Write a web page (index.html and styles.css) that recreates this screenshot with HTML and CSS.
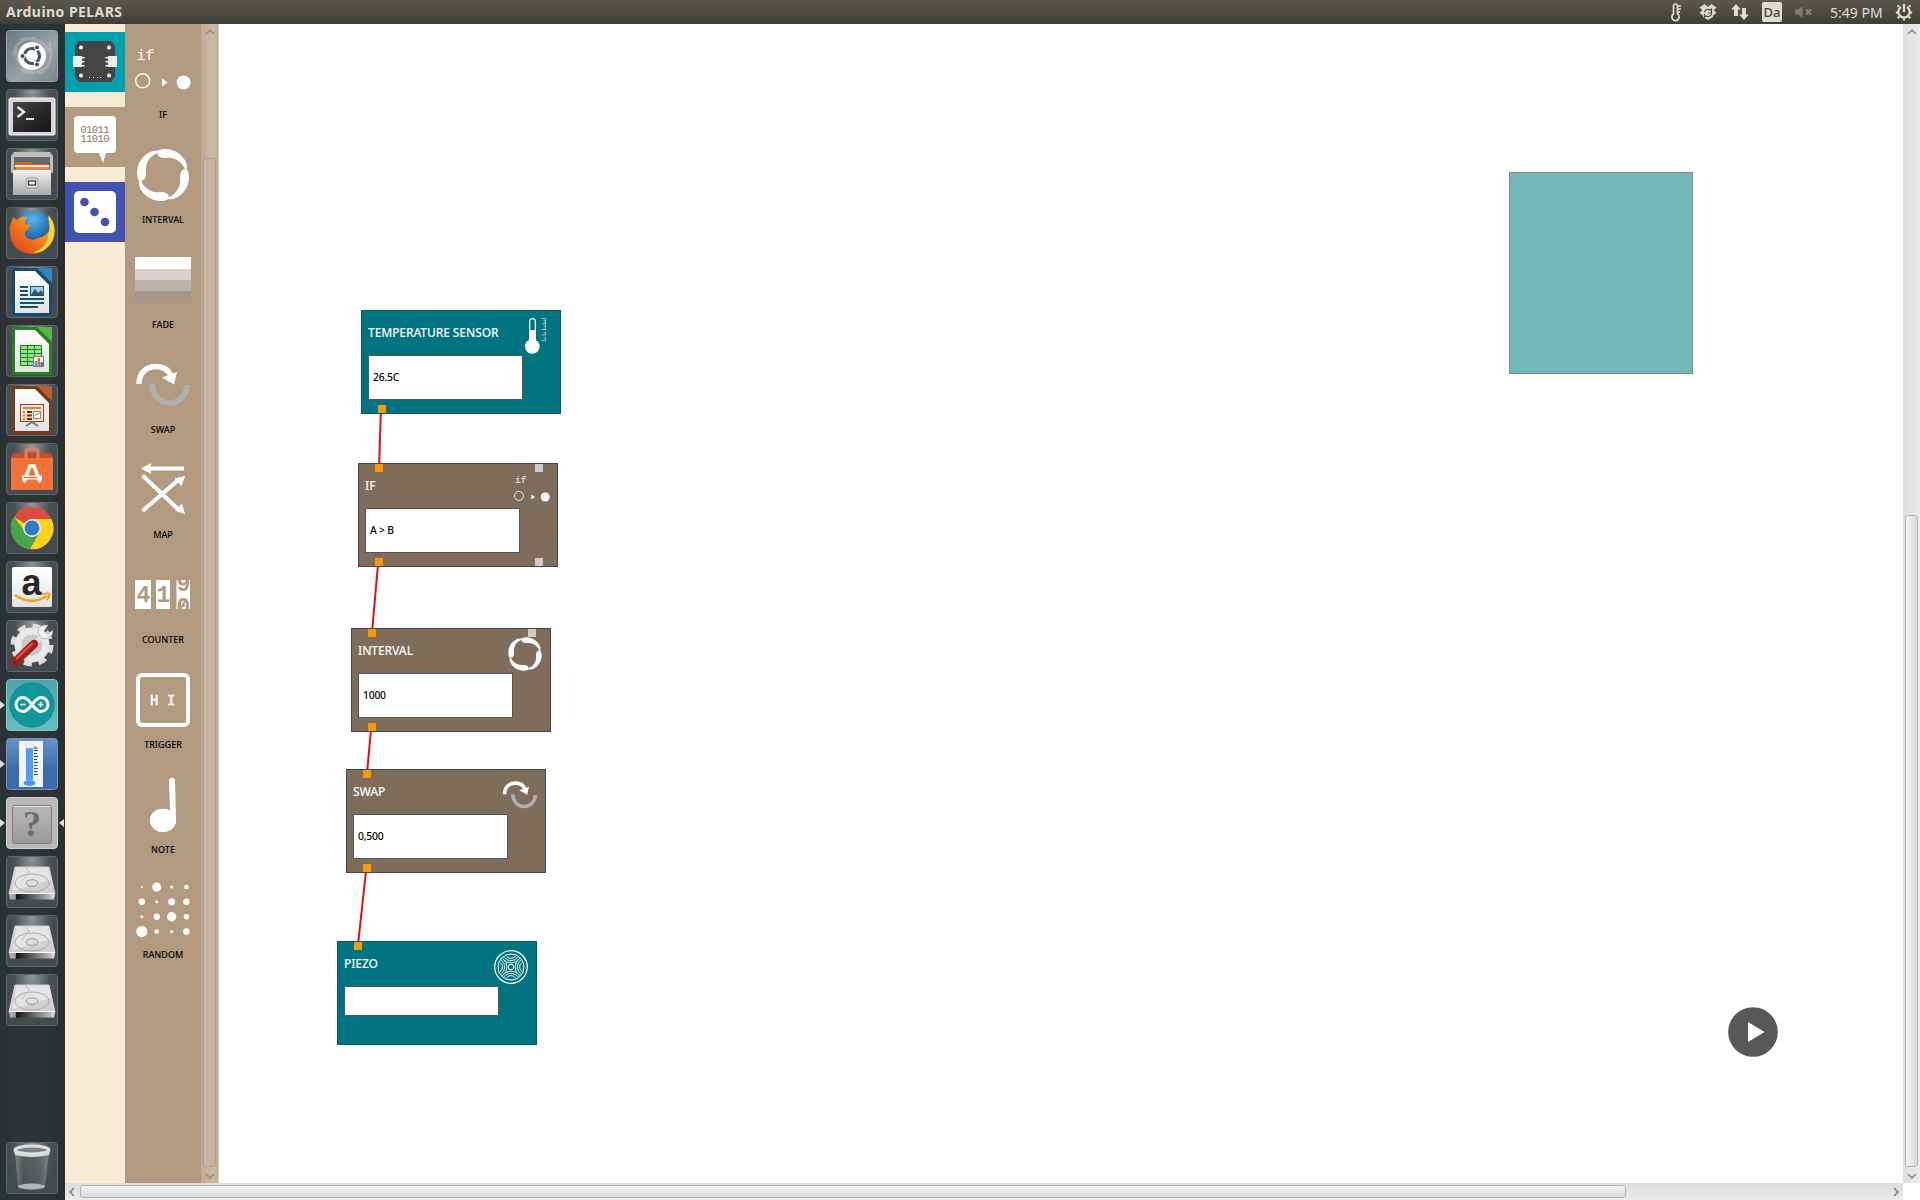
FILE: index.html
```html
<!DOCTYPE html>
<html lang="en">
<head>
<meta charset="utf-8">
<title>Arduino PELARS</title>
<link rel="stylesheet" href="styles.css">
</head>
<body>
<svg class="defs" aria-hidden="true">
  <defs>
    <linearGradient id="steel" x1="0" y1="0" x2="0" y2="1"><stop offset="0" stop-color="#f4f4f4"/><stop offset="1" stop-color="#a9a9a9"/></linearGradient>
    <linearGradient id="paper" x1="0" y1="0" x2="0" y2="1"><stop offset="0" stop-color="#fff"/><stop offset="1" stop-color="#e2e2e2"/></linearGradient>
    <linearGradient id="screen" x1="0" y1="0" x2="1" y2="1"><stop offset="0" stop-color="#4b4b4b"/><stop offset=".5" stop-color="#2a2a2a"/><stop offset="1" stop-color="#151515"/></linearGradient>
    <linearGradient id="fox" x1="0" y1="1" x2="1" y2="0"><stop offset="0" stop-color="#dc3a18"/><stop offset=".5" stop-color="#f27a1c"/><stop offset="1" stop-color="#ffd93f"/></linearGradient>
    <radialGradient id="globe" cx=".5" cy=".2" r=".8"><stop offset="0" stop-color="#58b8ea"/><stop offset=".6" stop-color="#1a62a8"/><stop offset="1" stop-color="#12285e"/></radialGradient>
    <linearGradient id="hdd-front" x1="0" y1="0" x2="1" y2="0"><stop offset="0" stop-color="#bbb"/><stop offset=".14" stop-color="#999"/><stop offset=".15" stop-color="#111"/><stop offset=".9" stop-color="#bbb"/><stop offset="1" stop-color="#eee"/></linearGradient>
    <linearGradient id="can" x1="0" y1="0" x2="1" y2="0"><stop offset="0" stop-color="#8b9092"/><stop offset=".25" stop-color="#4d5456"/><stop offset=".75" stop-color="#5d6466"/><stop offset="1" stop-color="#8b9092"/></linearGradient>
    <linearGradient id="fader" x1="0" y1="0" x2="0" y2="1"><stop offset="0" stop-color="#a49686"/><stop offset=".8" stop-color="#a49686"/><stop offset="1" stop-color="#ab9782"/></linearGradient>

    <symbol id="if" viewBox="0 0 56 56">
      <text x="1.500" y="18" class="glyph-if">if</text>
      <circle cx="7.700" cy="38.700" r="7" fill="none" stroke="#fff" stroke-width="1.400"/>
      <path d="M27 36.500l5.600 4-5.600 4z" fill="#fff"/><circle cx="48.600" cy="40.500" r="7" fill="#fff"/>
    </symbol>
    <symbol id="interval" viewBox="0 0 56 56">
      <g fill="#fff">
        <path id="q" d="M3 32Q1 26 3 19Q6 10 14 5.500Q18 3.200 23 4L22.500 6Q16 8 12 16Q10.300 20 11 26Q11 32 7.500 33.500Q4 34 3 32Z"/>
        <use href="#q" transform="rotate(90 28 28)"/><use href="#q" transform="rotate(180 28 28)"/><use href="#q" transform="rotate(270 28 28)"/>
      </g>
    </symbol>
    <symbol id="fade" viewBox="0 0 56 56">
      <path fill="#fff" d="M0 5h56v12H0z"/><path fill="#d6d1cc" d="M0 17h56v11H0z"/><path fill="#bcb2a8" d="M0 28h56v11H0z"/><path fill="url(#fader)" d="M0 39h56v11H0z"/>
    </symbol>
    <symbol id="swap" viewBox="0 0 56 56">
      <path d="M4 27C4 15 12 9.500 21 9.500C28 9.500 33.500 13 36 19" fill="none" stroke="#fff" stroke-width="5.500"/>
      <path d="M27 20.500L42 15L39 27.500Z" fill="#fff"/>
      <path d="M17 27a17.500 18.500 0 0 0 35 1" fill="none" stroke="#b0b0b0" stroke-width="5.500"/>
    </symbol>
    <symbol id="map" viewBox="0 0 56 56">
      <path d="M13 6.500H49M7.500 13.500L45 49M7.500 49L45 16.500" fill="none" stroke="#fff" stroke-width="4"/>
      <path fill="#fff" d="M6 6.500L16 1v11zM50 14l-3.500 10-7-7.500zM50 52l-3-10.500-7 7z"/>
    </symbol>
    <symbol id="counter" viewBox="0 0 56 56">
      <path d="M0 13h16v29H0zM21 13h14v29H21zM41.500 13H55v29H41.500z" fill="#fff"/>
      <clipPath id="wheel"><path d="M41 13h14v29H41z"/></clipPath>
      <g class="digit"><text x="1.500" y="34.500">4</text><text x="21.500" y="34.500">1</text><g clip-path="url(#wheel)"><text x="41.500" y="23.500">9</text><text x="41.500" y="46.500">0</text><path d="M45 43l6-11" fill="none" stroke="#b19a7f" stroke-width="1.800"/></g></g>
    </symbol>
    <symbol id="trigger" viewBox="0 0 56 56">
      <rect x="3" y="3" width="50" height="50" rx="4" fill="none" stroke="#fff" stroke-width="4"/>
      <text x="15" y="32.500" class="glyph-hi">H</text><text x="32" y="32.500" class="glyph-hi">I</text>
    </symbol>
    <symbol id="note" viewBox="0 0 56 56">
      <path d="M34 3.500Q34 .8 37 .8Q40 .8 40 3.500L41 42A13 11.500 0 1 1 35 33.500Z" fill="#fff"/>
      <ellipse cx="28" cy="43.500" rx="13" ry="11.500" fill="#fff"/>
    </symbol>
    <symbol id="random" viewBox="0 0 56 56">
      <g fill="#fff"><circle cx="6.800" cy="5" r="1"/><circle cx="21.700" cy="5" r="4.500"/><circle cx="36.600" cy="5" r="1.500"/><circle cx="51.400" cy="5" r="2.300"/>
      <circle cx="6.800" cy="19.800" r="3.200"/><circle cx="21.700" cy="19.800" r="1.500"/><circle cx="36.600" cy="19.800" r="3.500"/><circle cx="51.400" cy="19.800" r="3.200"/>
      <circle cx="6.800" cy="34.700" r="1.500"/><circle cx="21.700" cy="34.700" r="3.200"/><circle cx="36.600" cy="34.700" r="4.700"/><circle cx="51.400" cy="34.700" r="2.700"/>
      <circle cx="6.800" cy="49.500" r="5.500"/><circle cx="21.700" cy="49.500" r="2.300"/><circle cx="36.600" cy="49.500" r="1.600"/><circle cx="51.400" cy="49.500" r="3.200"/></g>
    </symbol>
    <symbol id="thermo" viewBox="0 0 36 36">
      <path d="M12.700 24V3.500Q12.700.6 15.500.6Q18.300.6 18.300 3.500V24" fill="none" stroke="#fff" stroke-width="1.200"/>
      <path d="M12 12h7v12h-7z" fill="#fff"/><circle cx="15.300" cy="28.500" r="7.300" fill="#fff"/>
      <path d="M28.500.5v11.500M28.500 14.500v2.500M28.500 19.500v3M24.500.5h4M26.500 3h2M25.500 5.500h3M26.500 8h2M24.500 11.500h4M26.500 14.500h2M24.500 17h4M26.500 20h2M24.500 22.500h4" stroke="#fff" stroke-width=".7" opacity=".85"/>
    </symbol>
    <symbol id="piezo" viewBox="0 0 36 36">
      <g fill="none" stroke="#fff"><circle cx="18" cy="18" r="16.300" stroke-width="1.200"/><circle cx="18" cy="18" r="13"/>
      <rect x="15.500" y="15.500" width="5" height="5" rx="1.500"/>
      <g id="arcs" stroke-width=".9"><path d="M9.500 9.500Q13 14 18 14T26.500 9.500M11.300 8.300Q14 11.700 18 11.700T24.700 8.300M13.500 7.200Q15.500 9.400 18 9.400T22.500 7.200"/></g>
      <use href="#arcs" transform="rotate(90 18 18)"/><use href="#arcs" transform="rotate(180 18 18)"/><use href="#arcs" transform="rotate(270 18 18)"/></g>
    </symbol>

    <symbol id="drive" viewBox="0 0 52 52">
      <path d="M9 11h34l6 27H3z" fill="#d0d0d0" stroke="#e8e8e8" stroke-width=".8"/>
      <path d="M10 12h32l3 12-38 11z" fill="#e4e4e4"/>
      <ellipse cx="26" cy="27" rx="17" ry="9" fill="none" stroke="#aaa"/>
      <ellipse cx="26" cy="27" rx="6" ry="3.300" fill="#ddd" stroke="#999"/>
      <path d="M20 12l3 4-7 9" fill="none" stroke="#bbb"/>
      <path d="M3 37.500h46l-1 6H4z" fill="url(#hdd-front)"/><path d="M3 37.500h46" stroke="#fff" stroke-width="1.200"/>
    </symbol>
  </defs>
</svg>

<header class="panel">
  <span class="panel-title">Arduino PELARS</span>
  <div class="tray">
    <svg class="tray-thermo" width="12" height="20" viewBox="0 0 12 20"><path d="M3.500 12V4a2 2 0 0 1 4 0v8a3.600 3.600 0 1 1-4 0z" fill="none" stroke="#dfdbd2" stroke-width="1.700"/><path d="M8 4h3M8 7h3M8 10h2" stroke="#dfdbd2" stroke-width="1.600"/></svg>
    <svg class="tray-box" width="18" height="18" viewBox="0 0 18 18"><path d="M5.500 1L9 4l3.500-3L17.500 4.500 14.500 7l3 3L14 12.500V14L9 17 4 14v-1.500L.5 10l3-3-3-2.500z" fill="#dfdbd2"/><path d="M5.500 9.500A3.500 3.500 0 0 1 11 7l1.500-1v4H9M12.500 10.500A3.500 3.500 0 0 1 7 13l-1.500 1v-3" fill="none" stroke="#4a4942" stroke-width="1.200"/></svg>
    <svg class="tray-net" width="18" height="18" viewBox="0 0 18 18"><path d="M5 1l5 5.500H7V13H3V6.500H0zM13 17l5-5.500h-3V5h-4v6.500H8z" fill="#dfdbd2"/></svg>
    <span class="tray-lang">Da</span>
    <svg class="tray-mute" width="18" height="14" viewBox="0 0 18 14"><path d="M0 4.500h3L7.500 1v12L3 9.500H0z" fill="#7d7c76"/><path d="M11 4.500l5 5M16 4.500l-5 5" stroke="#8a8983" stroke-width="1.800"/></svg>
    <span class="tray-time">5:49 PM</span>
    <svg class="tray-gear" width="18" height="18" viewBox="0 0 18 18"><path d="M6 4A5.700 5.700 0 1 0 12 4" fill="none" stroke="#dfdbd2" stroke-width="2.200"/><path d="M9 1v8M3.800 3.800L2.500 2.500M14.200 3.800l1.300-1.300M3 9.500H.8M15 9.500h2.200M4.500 13.500l-1.800 1.800M13.500 13.500l1.800 1.800M9 15v2.500" stroke="#dfdbd2" stroke-width="2.200"/></svg>
  </div>
</header>

<div class="desktop">
  <nav class="launcher">
    <div class="app app-dash"><svg viewBox="0 0 52 52"><g fill="none" stroke="#fff" opacity=".2" stroke-width="2.500"><path d="M7 25Q10 8 30 8M14 10Q35 5 44 22M43 12Q50 35 33 44M45 30Q35 48 15 40M10 18Q8 36 28 44"/></g><circle cx="26" cy="26" r="14" fill="#fff"/><circle cx="26" cy="26" r="7.500" fill="none" stroke="#4a5459" stroke-width="3" stroke-dasharray="13.500 2.200" stroke-dashoffset="6"/><g fill="#4a5459" stroke="#fff"><circle cx="16.500" cy="26" r="2.500"/><circle cx="31" cy="17.500" r="2.500"/><circle cx="31" cy="34.500" r="2.500"/></g></svg></div>
    <div class="app"><svg viewBox="0 0 52 52"><rect x="3" y="9" width="46" height="37" rx="1.500" fill="#d8d8d8" stroke="#f5f5f5"/><rect x="7" y="13" width="38" height="30" fill="url(#screen)"/><path d="M11.500 18l6.500 5-6.500 5" fill="none" stroke="#e8e8e8" stroke-width="2.400"/><path d="M20 30h8" stroke="#e8e8e8" stroke-width="2"/></svg></div>
    <div class="app"><svg viewBox="0 0 52 52"><path d="M8 4h36l3 4v17H5V8z" fill="#bdbdbd"/><path d="M8 9h36v15H8z" fill="#666"/><path d="M9 14h16l2 2h15v9H9z" fill="#c9622c"/><path d="M9 17h34v2H9z" fill="#f6e4cf"/><path d="M10 19h33v4H10z" fill="#e78a46"/><path d="M7 22h38v25H7z" fill="url(#steel)"/><rect x="20" y="30" width="12" height="10" rx="2" fill="#ddd" stroke="#999"/><rect x="22.500" y="33" width="7" height="4" fill="#eee" stroke="#333" stroke-width="1.200"/></svg></div>
    <div class="app"><svg viewBox="0 0 52 52"><circle cx="27" cy="25" r="21" fill="url(#globe)"/><path d="M5 16L7 10l4 3q5-5 11-3q-4 3-3 7l6 1-4 5q-4 2-1 7q6 5 12 1q7-1 11-7q2-7-2-14q9 7 6 19Q43 46 26 47Q5 45 4 26Q3 20 5 16z" fill="url(#fox)"/><path d="M42 8q10 10 5 25q-7 13-20 13q13-5 15-16q3-10 0-22z" fill="#ffd33b"/></svg></div>
    <div class="app"><svg viewBox="0 0 52 52"><path d="M6 2h26l14 14v34H6z" fill="#164b73"/><path d="M31 2h15v15z" fill="#3485b9"/><path d="M9 5h20l14 14v28H9z" fill="url(#paper)"/><path d="M14 21h8M14 25h8M14 29h8M14 33h24M14 37h24M14 41h18" stroke="#14507c" stroke-width="2"/><rect x="24.500" y="20.500" width="13" height="9" fill="#a2cfee" stroke="#14507c"/><path d="M25 29l4-6 3 4 3-3 3 5z" fill="#315868"/></svg></div>
    <div class="app"><svg viewBox="0 0 52 52"><path d="M6 2h26l14 14v34H6z" fill="#24831a"/><path d="M31 2h15v15z" fill="#55b649"/><path d="M9 5h20l14 14v28H9z" fill="url(#paper)"/><path d="M14 20h21v20H14z" fill="#9ae28f"/><path d="M14.500 20.500h21v20h-21zM14 24.500h21M14 28.500h21M14 32.500h21M14 36.500h21M21.500 20v20M28.500 20v20" fill="none" stroke="#168016"/><path d="M27.500 31.500h10v10h-10z" fill="#fff" stroke="#777"/><path d="M30 36v5" stroke="#4b9ee2" stroke-width="2.500"/><path d="M32.800 33v8" stroke="#e26b2c" stroke-width="2.500"/><path d="M35.700 37v4" stroke="#3978b8" stroke-width="2.500"/></svg></div>
    <div class="app"><svg viewBox="0 0 52 52"><path d="M6 2h26l14 14v34H6z" fill="#793a19"/><path d="M31 2h15v15z" fill="#b76131"/><path d="M9 5h20l14 14v28H9z" fill="url(#paper)"/><rect x="14.500" y="20.500" width="23" height="17" fill="#fde3cc" stroke="#9c4316"/><path d="M17 24h18" stroke="#c4825b" stroke-width="2"/><path d="M21 28h5M21 31.500h5M21 35h5" stroke="#7c2b08" stroke-width="2"/><path d="M17 28h2M17 31.500h2M17 35h2" stroke="#c4825b" stroke-width="2"/><path d="M27.500 27.500h7v7h-7z" fill="#fff" stroke="#888"/><path d="M28.500 32l2-2 1 1 2.500-2.500" stroke="#2a9a30" fill="none"/><path d="M26 38l-6 4M26 38l6 4" stroke="#777" stroke-width="2"/></svg></div>
    <div class="app"><svg viewBox="0 0 52 52"><path d="M5 15l3-5h36l3 5v32H5z" fill="#ef7339"/><path d="M5 15l3-5h36l3 5z" fill="#c84c23"/><path d="M20 17V9q0-3 3-3h6q3 0 3 3v8" fill="none" stroke="#e97a5a" stroke-width="3"/><path d="M18 39l6-16h4l6 16" fill="none" stroke="#fff" stroke-width="3.500"/><path d="M16 34.500h20" stroke="#fff" stroke-width="4"/><path d="M18 34.500h13" stroke="#ef7339" stroke-width="1.500"/></svg></div>
    <div class="app"><svg viewBox="0 0 52 52"><circle cx="26" cy="26" r="21" fill="#ffd21f"/><path d="M26 26L8 15a21 21 0 0 1 37 2H26z" fill="#dd4a3f"/><path d="M8 15a21 21 0 0 0 16 32l10-17-16-2z" fill="#48a548"/><path d="M26 17h19.500a21 21 0 0 1-21 30L34 30z" fill="#ffd21f"/><circle cx="26" cy="26" r="9" fill="#f2f5f7"/><circle cx="26" cy="26" r="7.500" fill="#3579c0"/></svg></div>
    <div class="app"><svg viewBox="0 0 52 52"><rect x="6" y="6" width="40" height="40" rx="2" fill="url(#paper)"/><text x="15.500" y="33.500" class="glyph-a">a</text><path d="M9 34Q25 45 41 35" fill="none" stroke="#ff9b12" stroke-width="2.500"/><path d="M36 33.500q7-2 7.500-.5t-2.500 6" fill="none" stroke="#ff9b12" stroke-width="2"/></svg></div>
    <div class="app"><svg viewBox="0 0 52 52"><circle cx="26" cy="25" r="19" fill="none" stroke="#ddd" stroke-width="5" stroke-dasharray="8 6.920"/><circle cx="26" cy="25" r="14" fill="#c8c8c8" stroke="#e8e8e8" stroke-width="7"/><path d="M22 31L40 13" stroke="#e3e3e3" stroke-width="5"/><path d="M42 5q-9-1-10 6 0 7 7 8 8-1 8-9l-6 4-3-3z" fill="#f0f0f0" stroke="#888" stroke-width=".5"/><path d="M9 42L28 24" stroke="#a61e1c" stroke-width="8.500" stroke-linecap="round"/><path d="M10 39L27 23" stroke="#da4b47" stroke-width="2.500"/><circle cx="8.500" cy="42.500" r="1.500" fill="#333"/></svg></div>
    <div class="app app-arduino running"><svg viewBox="0 0 52 52"><circle cx="26" cy="26" r="22" fill="#0f979d" stroke="#168187"/><path d="M26 25.500C22 20 20 18.500 17 18.500a7 7 0 0 0 0 14C20 32.500 22 31 26 25.500C30 20 32 18.500 35 18.500a7 7 0 0 1 0 14C32 32.500 30 31 26 25.500Z" fill="none" stroke="#fff" stroke-width="3"/><path d="M14.500 25.500h5M32 25.500h5.500M34.700 22.700v5.600" stroke="#fff" stroke-width="1.600"/></svg></div>
    <div class="app app-blue running"><svg viewBox="0 0 52 52"><path d="M13 3h24v46H13z" fill="#f1f4f8"/><path d="M20 6h7v36h-7z" fill="#519cf1"/><path d="M20 6h7v4h-7z" fill="#fff" stroke="#bbb" stroke-width=".5"/><ellipse cx="23.500" cy="45" rx="6" ry="3" fill="#4594f3"/><path d="M28 12.500h4M28 15.500h3M28 18.500h4M28 21.500h3M28 24.500h4M28 27.500h3M28 30.500h4M28 33.500h3M28 36.500h4" stroke="#444"/><path d="M28 8l5 2-5 2z" fill="#999"/></svg></div>
    <div class="app app-unknown running active"><svg viewBox="0 0 52 52"><rect x="6.500" y="8.500" width="39" height="38" rx="2" fill="url(#steel)" stroke="#777"/><rect x="6.500" y="8.500" width="39" height="38" rx="2" fill="#909090" opacity=".6"/><path d="M8 9.500h36" stroke="#e8e8e8"/><text x="26" y="39" class="glyph-q" text-anchor="middle">?</text></svg></div>
    <div class="app"><svg><use href="#drive"/></svg></div>
    <div class="app"><svg><use href="#drive"/></svg></div>
    <div class="app"><svg><use href="#drive"/></svg></div>
    <div class="app app-trash"><svg viewBox="0 0 52 52"><path d="M9 10h34l-4 35q-13 5-27 0z" fill="url(#can)" opacity=".8"/><ellipse cx="25.500" cy="44.500" rx="13.500" ry="3" fill="#b4b8b5"/><ellipse cx="26" cy="8" rx="17" ry="4" fill="#7b8080" stroke="#e2e2e0" stroke-width="3"/><path d="M8 9q18 8 36 0l-1 4q-17 4-34 0z" fill="#d9dad8"/></svg></div>
  </nav>

  <main class="window">
    <div class="workspace">
      <aside class="categories">
        <div class="category cat-board"><svg viewBox="0 0 60 60"><path d="M14 9h32l4 5v31l-4 5H14l-4-5V14z" fill="#434446"/><g fill="#fff"><circle cx="16" cy="15.500" r="2"/><circle cx="44" cy="15.500" r="2"/><circle cx="16" cy="43.500" r="2"/><circle cx="44" cy="43.500" r="2"/><path d="M15 25h4.500v1.500H15zM15 29h4.500v1.500H15zM15 33h4.500v1.500H15zM40.500 25H45v1.500h-4.500zM40.500 29H45v1.500h-4.500zM40.500 33H45v1.500h-4.500z"/><path d="M24 45h1v1h-1zM28 45h1v1h-1zM32 45h1v1h-1zM35 45h1v1h-1z"/></g><path d="M8 24h9v11H8zM43 24h9v11h-9z" fill="#eeeeee"/></svg></div>
        <div class="category cat-logic"><svg viewBox="0 0 60 60"><path d="M13 9h34q4 0 4 4v29q0 4-4 4h-6l-3 10-4-10H13q-4 0-4-4V13q0-4 4-4z" fill="#fff"/><g class="bits"><text x="15.500" y="25.800" textLength="29">01011</text><text x="15.500" y="34.800" textLength="29">11010</text></g></svg></div>
        <div class="category cat-random"><svg viewBox="0 0 60 60"><rect x="9" y="9" width="42" height="42" rx="5" fill="#fff"/><g fill="#4552ae"><circle cx="19.500" cy="20" r="4.300"/><circle cx="29.500" cy="30" r="4.300"/><circle cx="40" cy="40" r="4.300"/></g></svg></div>
      </aside>

      <aside class="palette">
        <div class="tool"><svg><use href="#if"/></svg><span>IF</span></div>
        <div class="tool"><svg><use href="#interval"/></svg><span>INTERVAL</span></div>
        <div class="tool"><svg><use href="#fade"/></svg><span>FADE</span></div>
        <div class="tool"><svg><use href="#swap"/></svg><span>SWAP</span></div>
        <div class="tool"><svg><use href="#map"/></svg><span>MAP</span></div>
        <div class="tool"><svg><use href="#counter"/></svg><span>COUNTER</span></div>
        <div class="tool"><svg><use href="#trigger"/></svg><span>TRIGGER</span></div>
        <div class="tool"><svg><use href="#note"/></svg><span>NOTE</span></div>
        <div class="tool"><svg><use href="#random"/></svg><span>RANDOM</span></div>
      </aside>
      <div class="vbar vbar-palette">
        <svg class="arrow" viewBox="0 0 10 6"><path d="M1 5l4-4 4 4"/></svg><div class="track"><div class="thumb"></div></div><svg class="arrow" viewBox="0 0 10 6"><path d="M1 1l4 4 4-4"/></svg>
      </div>

      <section class="canvas">
        <div class="node hardware n-temp"><h2>TEMPERATURE SENSOR</h2><svg class="node-icon"><use href="#thermo"/></svg><div class="field">26.5C</div><i class="port out"></i></div>
        <div class="node logic n-if"><h2>IF</h2><svg class="node-icon"><use href="#if"/></svg><div class="field">A &gt; B</div><i class="port in"></i><i class="port out"></i><i class="port in spare"></i><i class="port out spare"></i></div>
        <div class="node logic n-interval"><h2>INTERVAL</h2><i class="port in spare"></i><svg class="node-icon"><use href="#interval"/></svg><div class="field">1000</div><i class="port in"></i><i class="port out"></i></div>
        <div class="node logic n-swap"><h2>SWAP</h2><svg class="node-icon"><use href="#swap"/></svg><div class="field">0,500</div><i class="port in"></i><i class="port out"></i></div>
        <div class="node hardware n-piezo"><h2>PIEZO</h2><svg class="node-icon"><use href="#piezo"/></svg><div class="field short"></div><i class="port in"></i></div>
        <svg class="wires" viewBox="219 24 1684 1159"><path d="M380.800 414L379.200 463M377.800 567L372.400 628M370.800 732L367.400 769M365.800 873L358.400 941"/></svg>
        <div class="drop-area"></div>
        <svg class="play" viewBox="0 0 50 50"><circle cx="25" cy="25" r="24.800" fill="#58585b"/><path d="M20 15l16.500 10L20 35z" fill="#fff"/></svg>
      </section>
      <div class="vbar vbar-main">
        <svg class="arrow" viewBox="0 0 10 6"><path d="M1 5l4-4 4 4"/></svg><div class="track"><div class="thumb"></div></div><svg class="arrow" viewBox="0 0 10 6"><path d="M1 1l4 4 4-4"/></svg>
      </div>
    </div>
    <div class="hbar">
      <svg class="arrow-h" viewBox="0 0 6 10"><path d="M5 1L1 5l4 4"/></svg><div class="thumb-h"></div><svg class="arrow-h" viewBox="0 0 6 10"><path d="M1 1l4 4-4 4"/></svg>
    </div>
  </main>
</div>
</body>
</html>
```
FILE: styles.css
```css
* { box-sizing: border-box; }
body {
  margin: 0;
  width: 1920px;
  height: 1200px;
  overflow: hidden;
  display: flex;
  flex-direction: column;
  background: #fff;
  font-family: "Noto Sans", "Open Sans", sans-serif;
}
svg { display: block; flex: none; }
.defs { position: absolute; width: 0; height: 0; }

/* top panel */
.panel {
  height: 24px;
  flex: none;
  display: flex;
  align-items: center;
  justify-content: space-between;
  padding: 0 7px 0 6px;
  background: linear-gradient(#5b594f, #3f3e38);
  color: #dfdbd2;
}
.panel-title { font: bold 14px/24px "Noto Sans", sans-serif; letter-spacing: .45px; }
.tray { display: flex; align-items: center; }
.tray-thermo { margin-right: 17px; }
.tray-box { margin-right: 14px; }
.tray-net { margin-right: 13px; }
.tray-lang {
  width: 20px;
  height: 20px;
  margin-right: 13px;
  border-radius: 2px;
  background: #dfdbd2;
  color: #45443e;
  font: 500 13px/20px "Noto Sans", sans-serif;
  text-align: center;
}
.tray-mute { margin-right: 17px; }
.tray-time { width: 53px; margin-right: 12px; font-size: 14px; white-space: nowrap; }

.desktop { flex: 1; display: flex; min-height: 0; }

/* launcher */
.launcher {
  width: 65px;
  flex: none;
  display: flex;
  flex-direction: column;
  gap: 7px;
  padding: 6px 0 6px 6px;
  background: linear-gradient(90deg, #2b3235, #2f3537 50%, #293032);
}
.app {
  position: relative;
  width: 52px;
  height: 52px;
  flex: none;
  border: 1px solid #60686b;
  border-radius: 4px;
  background: radial-gradient(ellipse at 50% 0, #90979a 0, #4b5255 50%, transparent 75%), #444b4e;
}
.app > svg { width: 52px; height: 52px; margin: -1px; }
.app-dash { background: linear-gradient(135deg, #6b7b82, #98a4a9 60%, #77878d); border-color: #98a2a6; }
.app-arduino { background: linear-gradient(#4ba5aa, #67bdc0); border-color: #85c9cb; }
.app-blue { background: linear-gradient(#6b8fc7, #3b6ead 60%, #3c6ba6); border-color: #6f95c5; }
.app-unknown { background: #b9b9b9; border-color: #d2d2d2; }
.app-trash { margin-top: auto; }
.running::before, .active::after {
  content: "";
  position: absolute;
  top: 21px;
  border: 4px solid transparent;
}
.running::before { left: -7px; border-left: 5px solid #dfe1e2; border-right: 0; }
.active::after { right: -7px; border-right: 5px solid #dfe1e2; border-left: 0; }
.glyph-a { font: bold 36px "Liberation Sans", sans-serif; fill: #262626; }
.glyph-q { font: bold 36px "Liberation Serif", serif; fill: #6c6c6c; }

/* application window */
.window { flex: 1; display: flex; flex-direction: column; min-width: 0; }
.workspace { flex: 1; display: flex; min-height: 0; }

.categories {
  width: 60px;
  flex: none;
  display: flex;
  flex-direction: column;
  gap: 15px;
  padding-top: 8px;
  background: #f9ead6;
}
.category { height: 60px; }
.cat-board { background: #00a1ad; }
.cat-logic { background: #b19a7f; }
.cat-random { background: #4353b2; }
.bits { font: 10.500px "Liberation Mono", monospace; fill: #8d7558; }

.palette {
  width: 76px;
  flex: none;
  display: flex;
  flex-direction: column;
  background: #b19a7f;
}
.tool {
  height: 105px;
  flex: none;
  display: flex;
  flex-direction: column;
  align-items: center;
  padding-top: 18px;
}
.tool svg { width: 56px; height: 56px; }
.tool span { margin-top: 10px; color: #000; font-size: 9px; font-weight: 500; line-height: 13px; }
.glyph-if { font: 15px "Liberation Mono", monospace; fill: #fff; }
.glyph-hi { font: 14px "Liberation Mono", monospace; fill: #fff; stroke: #fff; stroke-width: .4px; }
.digit { font: bold 23px "Liberation Mono", monospace; fill: #b19a7f; }

/* scrollbars */
.vbar { flex: none; display: flex; flex-direction: column; align-items: center; padding: 5px 0 4px; }
.vbar .arrow { width: 10px; height: 6px; }
.arrow, .arrow-h { fill: none; stroke: #858585; stroke-width: 1.6; }
.track { flex: 1; display: flex; flex-direction: column; justify-content: flex-end; padding-bottom: 6px; }
.thumb { border: 1px solid #b3b3b3; border-radius: 3px; background: linear-gradient(90deg, #f5f5f5, #dadada); }
.vbar-palette { width: 18px; background: linear-gradient(90deg, #bca992, #cbbba8 70%, #c0ae9a); border-right: 1px solid #d8d1ca; }
.vbar-palette .arrow { stroke: #9a8976; }
.vbar-palette .thumb { width: 13px; height: 1009px; border-color: #b09e8a; background: linear-gradient(90deg, #c9b9a6, #c1b09c); }
.vbar-main { width: 17px; background: linear-gradient(90deg, #dedede, #ececec); }
.vbar-main .thumb { width: 13px; height: 652px; }
.hbar {
  width: 1838px;
  height: 17px;
  flex: none;
  display: flex;
  align-items: center;
  padding: 0 4px;
  background: linear-gradient(#dcdcdc, #ececec);
}
.arrow-h { width: 6px; height: 10px; }
.thumb-h {
  width: 1546px;
  height: 13px;
  margin: 0 auto 0 5px;
  border: 1px solid #b3b3b3;
  border-radius: 3px;
  background: linear-gradient(#f5f5f5, #dadada);
}

/* free-form canvas */
.canvas { position: relative; width: 1684px; flex: none; background: #fff; }
.node {
  position: absolute;
  width: 200px;
  height: 104px;
  padding: 12px 6px 0;
  border: 1px solid;
}
.hardware { background: #007480; border-color: #0a5a63; }
.logic { background: #7e6d5b; border-color: #4a4542; }
.n-temp { left: 142px; top: 286px; }
.n-if { left: 139px; top: 439px; }
.n-interval { left: 132px; top: 604px; }
.n-swap { left: 127px; top: 745px; }
.n-piezo { left: 118px; top: 917px; }
.node h2 { margin: 0; height: 32px; color: #fff; font-size: 12px; font-weight: 500; line-height: 20px; letter-spacing: -.1px; white-space: nowrap; }
.node-icon { position: absolute; left: 155px; top: 7px; width: 36px; height: 36px; }
.field {
  width: 155px;
  height: 45px;
  padding-left: 4px;
  border: 1px solid #555;
  background: #fff;
  color: #000;
  font-size: 10.300px;
  font-weight: 500;
  line-height: 43px;
  letter-spacing: -.2px;
}
.field.short { height: 30px; }
.port { position: absolute; left: 16px; width: 8px; height: 8px; background: #fb9a08; }
.port.in { top: 0; }
.port.out { top: 94px; }
.port.spare { left: 176px; background: #ccc; }
.wires { position: absolute; inset: 0; width: 1684px; height: 1159px; fill: none; stroke: #e00e14; stroke-width: 2; pointer-events: none; }
.drop-area { position: absolute; left: 1290px; top: 148px; width: 184px; height: 202px; border: 1px solid #7b8b8b; background: #74b7b6; }
.play { position: absolute; left: 1509px; top: 983px; width: 50px; height: 50px; }
```
